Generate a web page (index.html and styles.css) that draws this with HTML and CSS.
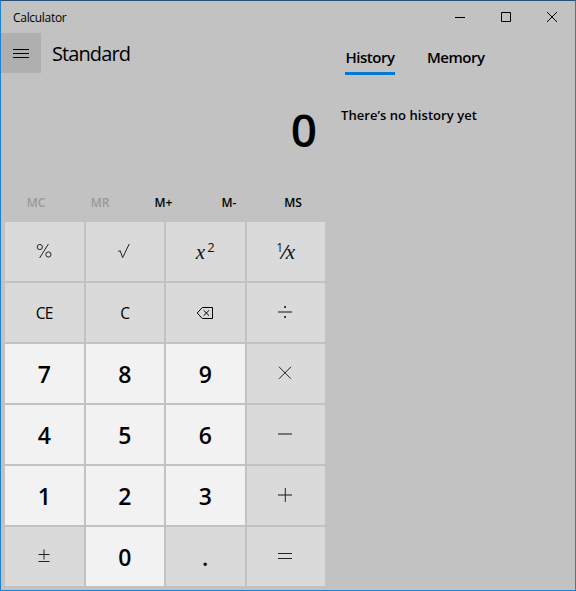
FILE: index.html
```html
<!DOCTYPE html>
<html lang="en">
<head>
<meta charset="utf-8">
<title>Calculator</title>
<link rel="stylesheet" href="styles.css">
</head>
<body>
<div class="window">
  <header class="titlebar">
    <span class="title">Calculator</span>
    <div class="controls">
      <button class="control" aria-label="Minimize"><svg width="10" height="10"><path d="M0 5.5H10"/></svg></button>
      <button class="control" aria-label="Maximize"><svg width="10" height="10"><path d="M.5 .5H9.5V9.5H.5Z"/></svg></button>
      <button class="control" aria-label="Close"><svg width="10" height="10"><path d="M0 0L10 10M10 0L0 10"/></svg></button>
    </div>
  </header>
  <div class="content">
    <main class="calc">
      <div class="mode">
        <button class="menu" aria-label="Menu"><svg width="16" height="10"><path d="M0 1.5H16M0 5.5H16M0 9.5H16"/></svg></button>
        <h1 class="mode-name">Standard</h1>
      </div>
      <div class="display"><span>0</span></div>
      <div class="memory">
        <button class="mem off">MC</button>
        <button class="mem off">MR</button>
        <button class="mem plus">M+</button>
        <button class="mem">M-</button>
        <button class="mem">MS</button>
      </div>
      <div class="keys">
        <button class="key percent"><svg width="16" height="16"><circle cx="3.8" cy="4" r="2.6"/><circle cx="12.4" cy="11.5" r="2.6"/><path d="M12.4 1L3.6 15"/></svg></button>
        <button class="key"><svg width="14" height="16"><path d="M1.2 8.5L3.2 7.7L5.6 14.7L12.2 1"/></svg></button>
        <button class="key math"><i>x</i><span class="power">2</span></button>
        <button class="key math"><span class="numerator">1</span><span class="slash">⁄</span><i>x</i></button>

        <button class="key"><span class="clear">CE</span></button>
        <button class="key"><span class="clear">C</span></button>
        <button class="key back"><svg width="17" height="13"><path d="M6.3 .5H16.5V11.5H6.3L1.2 6Z"/><path d="M7.7 3.3L13.1 8.7M13.1 3.3L7.7 8.7"/></svg></button>
        <button class="key"><svg width="16" height="16"><path class="soft" d="M1 8H15"/><path class="dot" d="M7.2 2h1.7v2H7.2zM7.2 12h1.7v2H7.2z"/></svg></button>

        <button class="key digit">7</button>
        <button class="key digit">8</button>
        <button class="key digit">9</button>
        <button class="key"><svg width="16" height="16"><path d="M2 1.8L14 13.8M14 1.8L2 13.8"/></svg></button>

        <button class="key digit">4</button>
        <button class="key digit">5</button>
        <button class="key digit">6</button>
        <button class="key"><svg width="16" height="16"><path class="soft" d="M1 8H15"/></svg></button>

        <button class="key digit">1</button>
        <button class="key digit">2</button>
        <button class="key digit">3</button>
        <button class="key"><svg width="16" height="16"><path class="soft" d="M1 8H15"/><path d="M8.3 1V15"/></svg></button>

        <button class="key sign"><svg width="12" height="14"><path d="M.5 5.5H11.5M6 .5V10.5M.5 12.5H11.5"/></svg></button>
        <button class="key digit">0</button>
        <button class="key digit point">.</button>
        <button class="key"><svg width="16" height="16"><path d="M1 5.5H15M1 10.5H15"/></svg></button>
      </div>
    </main>
    <aside class="panel">
      <nav class="tabs">
        <button class="tab active"><span class="tab-history">History</span></button>
        <button class="tab"><span class="tab-memory">Memory</span></button>
      </nav>
      <p class="empty">There’s no history yet</p>
    </aside>
  </div>
</div>
</body>
</html>
```

FILE: styles.css
```css
* { box-sizing: border-box; }
body {
  margin: 0;
  font-family: "Open Sans", "Noto Sans", sans-serif;
  color: #000;
}
button {
  border: 0;
  padding: 0;
  background: none;
  color: inherit;
  font: inherit;
}
svg { display: block; fill: none; stroke: #000; stroke-width: 1; }
.window {
  width: 576px;
  height: 591px;
  border: 1px solid #1883d7;
  border-top-color: #255078;
  background: #c2c2c2;
}
.titlebar { display: flex; justify-content: space-between; height: 32px; }
.title { padding-left: 12px; font-size: 12px; line-height: 33px; letter-spacing: -0.3px; }
.controls { display: flex; }
.control { display: grid; place-items: center; width: 46px; height: 32px; }
.content { display: flex; }
.calc { width: 328px; }
.mode { display: flex; height: 40px; }
.menu { display: grid; place-items: center; width: 40px; height: 40px; background: #afafaf; }
.mode-name {
  margin: 0;
  padding-left: 11px;
  font-size: 20px;
  font-weight: 400;
  line-height: 41px;
  letter-spacing: -0.9px;
}
.display {
  height: 111px;
  padding-right: 12px;
  text-align: right;
  font-size: 46px;
  font-weight: 600;
  line-height: 112px;
}
.memory { display: flex; width: 320px; height: 38px; margin-left: 4px; }
.mem { width: 64px; font-size: 12px; font-weight: 600; line-height: 38px; }
.mem.off { color: #999; padding-right: 2px; }
.mem.plus { padding-right: 3px; }
.keys {
  display: grid;
  grid-template-columns: repeat(4, 78.5px);
  grid-template-rows: repeat(6, 59px);
  gap: 2px;
  margin-left: 4px;
}
.key { display: flex; justify-content: center; align-items: center; background: #dadada; }
.key svg { margin: 0 2px 2px 0; stroke: #222; }
.key .soft { stroke: #555; stroke-width: 1.5; }
.key .dot { fill: #222; stroke: none; }
.back svg { margin: 2px 1px 0 0; stroke: #000; }
.percent svg, .sign svg { margin-right: 1px; }
.sign svg { margin-bottom: 1px; }
.digit { background: #f2f2f2; font-size: 23px; font-weight: 600; line-height: 59px; padding-top: 2px; }
.point { background: #dadada; }
.clear { font-size: 15.5px; letter-spacing: -0.6px; line-height: 20px; }
.math { color: #111; }
.math i { font-family: "Liberation Serif", serif; font-size: 21px; padding-top: 1px; }
.power { font-size: 13px; padding: 0 0 9px 2px; }
.numerator { font-size: 12px; padding-bottom: 9px; }
.slash { font-size: 20px; }
.panel { flex: 1; padding-top: 9px; }
.tabs { display: flex; gap: 32px; padding-left: 16px; }
.tab { height: 33px; border-bottom: 3px solid transparent; font-size: 15px; font-weight: 600; line-height: 30px; letter-spacing: -0.5px; }
.tab.active { width: 50px; border-color: #0078d7; }
.empty { margin: 28px 0 0 12px; font-size: 13px; font-weight: 600; line-height: 24px; letter-spacing: 0.05px; }
```
